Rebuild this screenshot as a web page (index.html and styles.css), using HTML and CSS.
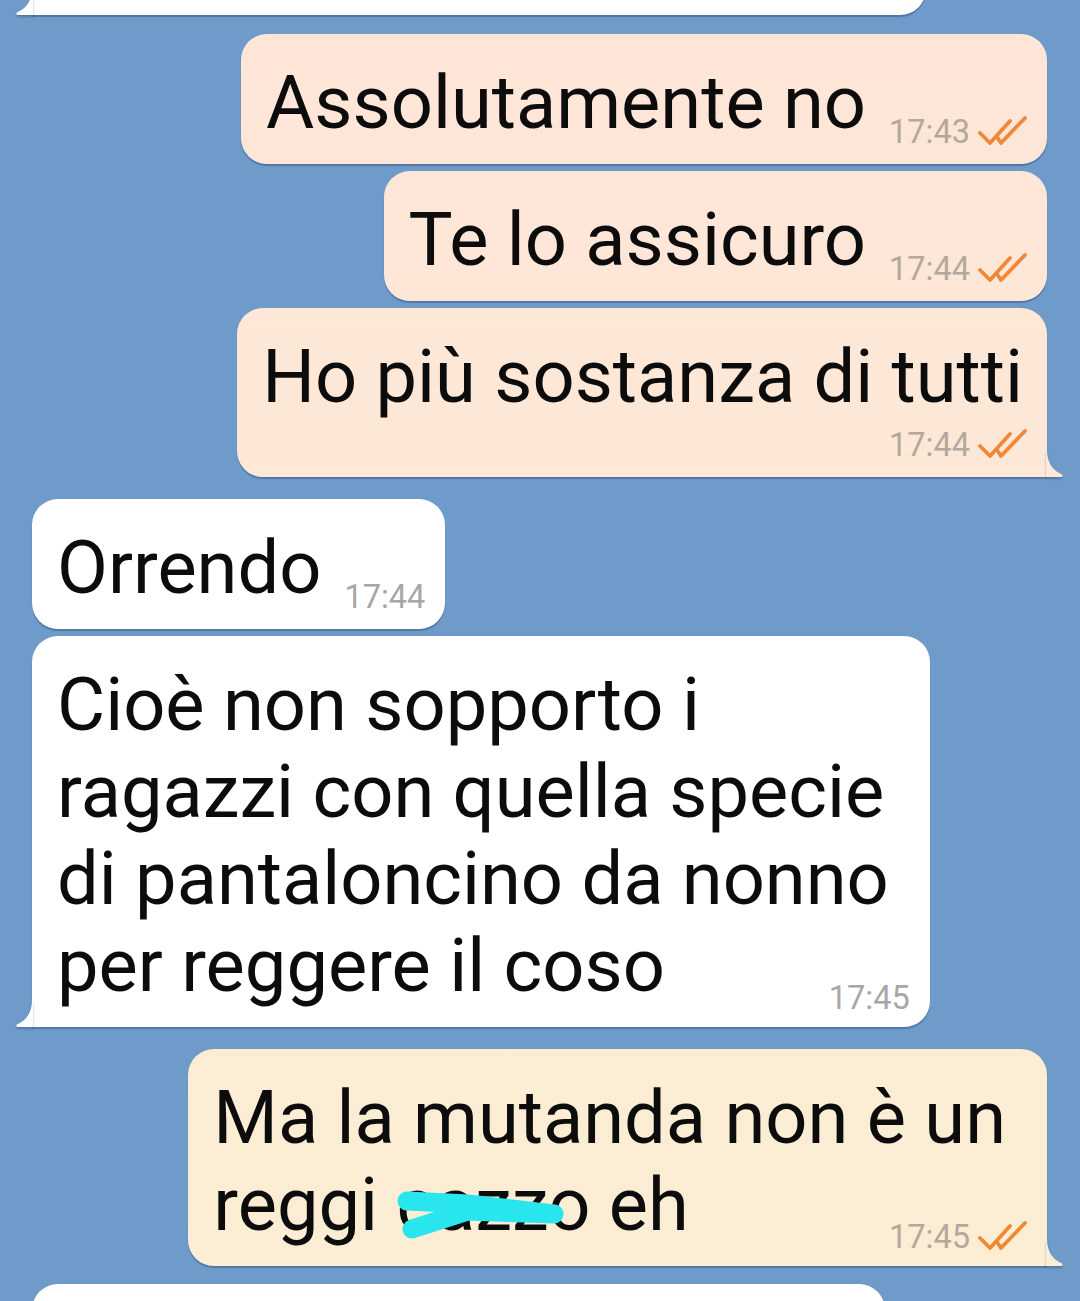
FILE: index.html
```html
<!DOCTYPE html>
<html lang="it">

<head>
    <meta charset="UTF-8">
    <meta name="viewport" content="width=device-width, initial-scale=1.0">
    <title>Chat</title>
    <link rel="stylesheet" href="styles.css">
</head>

<body>
    <div class="chat">
        <div class="msg in ghost cut-top">
            <svg class="tail" viewBox="0 0 17 26"><path d="M0 0H1C1.5 11 6 19 15 23C17.5 24 17 26 14.5 26H0Z"/></svg>
        </div>

        <div class="msg out">
            <p class="text">Assolutamente no</p>
            <span class="meta"><span class="time">17:43</span><svg class="ticks" viewBox="0 0 49 29"><path d="M2 17L12 27L32 5M19 21L23 27L47 2"/></svg></span>
        </div>

        <div class="msg out">
            <p class="text">Te lo assicuro</p>
            <span class="meta"><span class="time">17:44</span><svg class="ticks" viewBox="0 0 49 29"><path d="M2 17L12 27L32 5M19 21L23 27L47 2"/></svg></span>
        </div>

        <div class="msg out stack tailed">
            <p class="text">Ho più sostanza di tutti</p>
            <span class="meta"><span class="time">17:44</span><svg class="ticks" viewBox="0 0 49 29"><path d="M2 17L12 27L32 5M19 21L23 27L47 2"/></svg></span>
            <svg class="tail" viewBox="0 0 17 26"><path d="M0 0H1C1.5 11 6 19 15 23C17.5 24 17 26 14.5 26H0Z"/></svg>
        </div>

        <div class="msg in first">
            <p class="text">Orrendo</p>
            <span class="meta"><span class="time">17:44</span></span>
        </div>

        <div class="msg in multi tailed">
            <p class="text">Cioè non sopporto i<br>ragazzi con quella specie<br>di pantaloncino da nonno<br>per reggere il coso</p>
            <span class="meta"><span class="time">17:45</span></span>
            <svg class="tail" viewBox="0 0 17 26"><path d="M0 0H1C1.5 11 6 19 15 23C17.5 24 17 26 14.5 26H0Z"/></svg>
        </div>

        <div class="msg out multi tailed first late">
            <p class="text">Ma la mutanda non è un<br>reggi <span class="censored">cazzo<svg class="scribble" viewBox="0 0 200 90"><path d="M11 40L72 43L158 53M16 68L72 50L158 53"/></svg></span> eh</p>
            <span class="meta"><span class="time">17:45</span><svg class="ticks" viewBox="0 0 49 29"><path d="M2 17L12 27L32 5M19 21L23 27L47 2"/></svg></span>
            <svg class="tail" viewBox="0 0 17 26"><path d="M0 0H1C1.5 11 6 19 15 23C17.5 24 17 26 14.5 26H0Z"/></svg>
        </div>

        <div class="msg in ghost cut-bottom"></div>
    </div>
</body>

</html>
```

FILE: styles.css
```css
:root {
    --wall: #6f9bca;
    --shadow: rgba(35, 60, 100, .38);
    --tick: #ef8839;
}

body {
    margin: 0;
    height: 1301px;
    overflow: hidden;
    background: var(--wall);
    font-family: Roboto, "Noto Sans", sans-serif;
}

.chat {
    display: flex;
    flex-direction: column;
}

.msg {
    position: relative;
    flex-shrink: 0;
    display: flex;
    align-items: flex-end;
    margin-top: 7px;
    padding: 25px 20px 13px 25px;
    border-radius: 26px;
    box-shadow: 0 2px 1px var(--shadow);
}

.msg.in {
    align-self: flex-start;
    margin-left: 32px;
    background: #fff;
}

.msg.out {
    align-self: flex-end;
    margin-right: 33px;
    background: linear-gradient(#fee5d8, #fbeed4) fixed;
}

.msg.first {
    margin-top: 22px;
}

.text {
    margin: 0 0 5px;
    font-size: 74px;
    line-height: 87px;
    color: #0c0c0c;
    white-space: nowrap;
}

.meta {
    display: flex;
    align-items: flex-end;
    flex-shrink: 0;
    margin-left: 23px;
    font-size: 32.5px;
    line-height: 37px;
}

.in .time {
    color: #a7a7a7;
}

.out .time {
    color: #b3a89e;
}

.ticks {
    width: 49px;
    height: 29px;
    margin: 0 0 6px 8px;
    fill: none;
    stroke: var(--tick);
    stroke-width: 3.8;
    stroke-linecap: round;
    stroke-linejoin: round;
}

/* time under the text, or tucked into the last line */
.msg.stack,
.msg.multi {
    flex-direction: column;
}

.msg.stack .text {
    padding-right: 4px;
}

.msg.stack .meta {
    align-self: flex-end;
    margin: 2px 0 0;
}

.msg.multi {
    padding-bottom: 10px;
}

.msg.multi .text {
    padding-right: 21px;
}

.msg.multi .meta {
    align-self: flex-end;
    margin: -34px 0 0;
}

/* bubble tails */
.tail {
    position: absolute;
    bottom: 0;
    width: 17px;
    height: 26px;
    filter: drop-shadow(0 2px 1px var(--shadow));
}

.out .tail {
    right: -16px;
    fill: #fde9d7;
}

.out.late .tail {
    fill: #fbeed4;
}

.in .tail {
    left: -16px;
    fill: #fff;
    transform: scaleX(-1);
}

.out.tailed {
    border-bottom-right-radius: 0;
}

.in.tailed,
.in.cut-top {
    border-bottom-left-radius: 0;
}

/* the cut-off bubbles at the edges of the screen */
.ghost {
    padding: 0;
    height: 130px;
}

.cut-top {
    width: 894px;
    margin-top: -115px;
}

.cut-top + .msg {
    margin-top: 19px;
}

.cut-bottom {
    width: 853px;
    margin-top: 18px;
}

.censored {
    position: relative;
}

.scribble {
    position: absolute;
    left: 0;
    top: 0;
    width: 200px;
    height: 90px;
    fill: none;
    stroke: #29e5ed;
    stroke-width: 19;
    stroke-linecap: round;
    stroke-linejoin: round;
}
```
